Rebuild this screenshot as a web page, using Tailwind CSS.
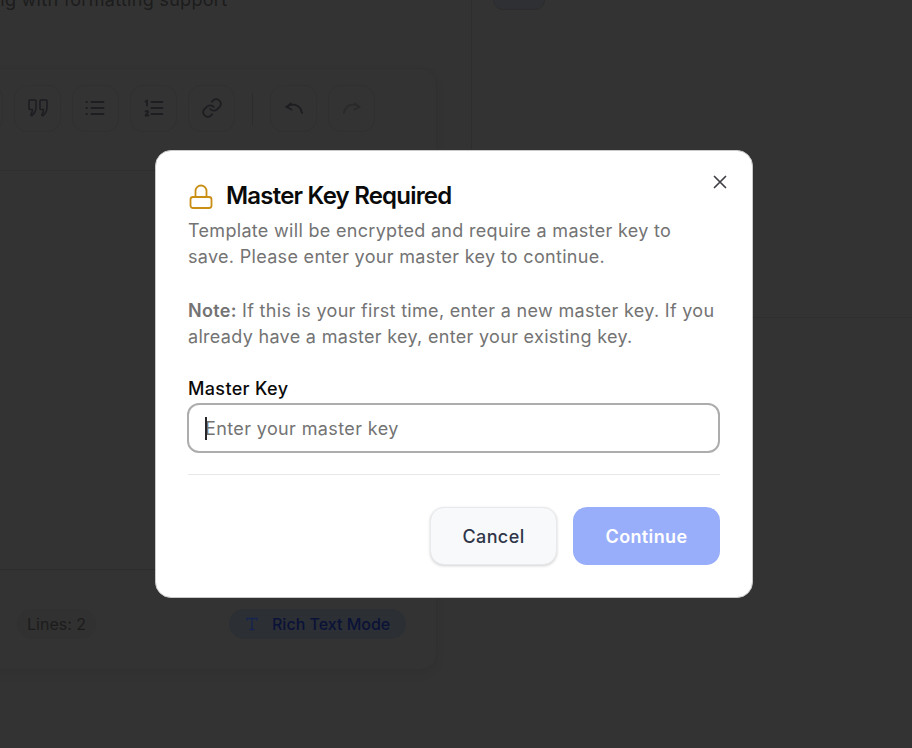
<!DOCTYPE html>
<html lang="en">
<head>
  <meta charset="UTF-8" />
  <meta name="viewport" content="width=device-width, initial-scale=1.0" />
  <title>Master Key Required</title>
  <script src="https://cdn.jsdelivr.net/npm/@tailwindcss/browser@4"></script>
</head>
<body class="bg-[#333333] font-['Inter',sans-serif] overflow-hidden">

<div class="relative h-[748px] w-[912px] overflow-hidden">

  <!-- Page behind the overlay -->
  <div class="flex h-full">
    <div class="w-[471px] shrink-0 pr-[34px] pt-px">
      <p class="mt-[-13px] h-[24px] text-[18px] leading-[24px] tracking-[0.3px] text-[#1c1c1c] whitespace-nowrap ml-[-44px]">Editing with formatting support</p>

      <div class="mt-[56px] ml-[-20px] h-[602px] flex flex-col rounded-2xl border border-[#303030] shadow-[0_4px_10px_rgba(0,0,0,0.06)]">
        <!-- Toolbar -->
        <div class="h-[102px] pb-[22px] border-b border-[#2e2e2e] flex items-center">
          <div class="flex items-center gap-[11px] ml-[-25px]">
            <div class="size-[47px] rounded-[13px] border border-[#303030]"></div>
            <div class="size-[47px] rounded-[13px] border border-[#303030] flex items-center justify-center">
              <svg class="size-[22px] mt-[-2px]" viewBox="0 0 22 22" fill="none" stroke="#1d1d22" stroke-width="1.6" stroke-linecap="round" stroke-linejoin="round"><path d="M3 3h5c.6 0 1 .4 1 1v6.500c0 3.500-1.500 6-4 8-.7.5-1.500-.3-1-1 .8-1.200 1.500-2.500 1.500-5H3c-.6 0-1-.4-1-1V4c0-.6.4-1 1-1z"/><path d="M14 3h5c.6 0 1 .4 1 1v6.500c0 3.500-1.500 6-4 8-.7.5-1.500-.3-1-1 .8-1.200 1.500-2.500 1.500-5H14c-.6 0-1-.4-1-1V4c0-.6.4-1 1-1z"/></svg>
            </div>
            <div class="size-[47px] rounded-[13px] border border-[#303030] flex items-center justify-center">
              <svg class="size-[22px] mt-[-2px]" viewBox="0 0 22 22" fill="none" stroke="#1d1d22" stroke-width="1.8" stroke-linecap="round"><path d="M6.500 5h12M6.500 11h12M6.500 17h12M1.500 5h.5M1.500 11h.5M1.500 17h.5"/></svg>
            </div>
            <div class="size-[47px] rounded-[13px] border border-[#303030] flex items-center justify-center">
              <svg class="size-[22px] mt-[-2px]" viewBox="0 0 22 22" fill="none" stroke="#1d1d22" stroke-width="1.8" stroke-linecap="round" stroke-linejoin="round"><path d="M8.500 5h11M8.500 11h11M8.500 17h11"/><path d="M2.500 4.500 4 3.500v5M2.500 14.500c.4-1 2.800-1 2.800.5 0 1-2.800 2.200-2.800 3.500h3"/></svg>
            </div>
            <div class="size-[47px] rounded-[13px] border border-[#303030] flex items-center justify-center">
              <svg class="size-[22px] mt-[-2px]" viewBox="0 0 24 24" fill="none" stroke="#1d1d22" stroke-width="1.9" stroke-linecap="round" stroke-linejoin="round"><path d="M10 13a5 5 0 0 0 7.500.5l3-3a5 5 0 0 0-7-7l-1.700 1.700"/><path d="M14 11a5 5 0 0 0-7.500-.5l-3 3a5 5 0 0 0 7 7l1.700-1.700"/></svg>
            </div>
            <div class="w-px h-[32px] bg-[#2c2c2c] mx-[6px]"></div>
            <div class="size-[47px] rounded-[13px] border border-[#303030] flex items-center justify-center">
              <svg class="size-[22px] mt-[-2px]" viewBox="0 0 22 22" fill="none" stroke="#1d1d22" stroke-width="1.800" stroke-linecap="round" stroke-linejoin="round"><path d="M8 6.500 3.500 10 8.500 12.500"/><path d="M3.500 10c5-4 13.500-3.500 15.500 6"/></svg>
            </div>
            <div class="size-[47px] rounded-[13px] border border-[#303030] flex items-center justify-center">
              <svg class="size-[22px] mt-[-2px]" viewBox="0 0 22 22" fill="none" stroke="#2a2a2a" stroke-width="1.800" stroke-linecap="round" stroke-linejoin="round"><path d="M14 6.500 18.500 10 13.500 12.500"/><path d="M18.500 10c-5-4-13.500-3.500-15.500 6"/></svg>
            </div>
          </div>
        </div>

        <!-- Editor area -->
        <div class="flex-1"></div>

        <!-- Footer -->
        <div class="h-[100px] border-t border-[#2c2c2c] flex items-center justify-between pl-[36px] pr-[30px] pt-[8px]">
          <span class="h-[30px] px-[10px] rounded-full bg-[#313131] text-[16px] leading-[30px] text-[#1c1c1c]">Lines: 2</span>
          <span class="h-[30px] w-[177px] pl-[15px] rounded-full bg-[#2c2f33] flex items-center gap-[12px] text-[16px] font-medium text-[#0a1238] whitespace-nowrap">
            <svg class="size-[16px] shrink-0" viewBox="0 0 16 16" fill="none" stroke="#152450" stroke-width="1.300" stroke-linecap="round" stroke-linejoin="round"><path d="M3 4V2.500h10V4M8 2.500v11M6 13.500h4"/></svg>
            Rich Text Mode
          </span>
        </div>
      </div>
    </div>

    <!-- Right panel -->
    <div class="flex-1 overflow-hidden">
      <div class="h-[318px] border-l border-b border-[#2e2e2e] pl-[21px]">
        <div class="translate-y-[-31px] w-[52px] h-[41px] rounded-[10px] bg-[#2e3033] border border-[#2c2c2c]"></div>
      </div>
    </div>
  </div>

  <!-- Modal -->
  <div class="absolute inset-0 flex items-center justify-center pr-[4px]">
    <div class="relative w-[598px] h-[448px] bg-white rounded-2xl border border-[#c9c9c9] pt-[31px] px-[32px]">
      <button class="absolute top-[23px] right-[24px] text-[#3f3f46]">
        <svg class="size-[16px]" viewBox="0 0 16 16" fill="none" stroke="currentColor" stroke-width="1.700" stroke-linecap="round"><path d="M2.500 2.500l11 11M13.500 2.500l-11 11"/></svg>
      </button>

      <div class="flex items-center gap-[12px] h-[28px]">
        <svg class="size-[26px] shrink-0" viewBox="0 0 26 26" fill="none" stroke="#c98f14" stroke-width="1.800" stroke-linecap="round" stroke-linejoin="round"><rect x="2.500" y="14" width="21" height="11" rx="2.500"/><path d="M7.500 14V8a5.500 5.500 0 0 1 11 0v6"/></svg>
        <h2 class="text-[24px] leading-[28px] font-semibold tracking-[-0.8px] text-[#0a0a0a] whitespace-nowrap">Master Key Required</h2>
      </div>

      <p class="mt-[8px] text-[18px] leading-[26px] tracking-[0.31px] text-[#737373]">Template will be encrypted and require a master key to save. Please enter your master key to continue.</p>
      <p class="mt-[28px] text-[18px] leading-[26px] tracking-[0.31px] text-[#737373]"><strong class="font-semibold">Note:</strong> If this is your first time, enter a new master key. If you already have a master key, enter your existing key.</p>

      <label class="block mt-[27px] text-[18px] leading-[24px] tracking-[0.35px] font-medium text-[#0a0a0a]">Master Key</label>
      <div class="mt-[2px] ml-[-1px] h-[50px] rounded-[12px] border-2 border-[#adadad] flex items-center pl-[16px] relative">
        <span class="absolute left-[16px] top-[12px] w-[2px] h-[23px] bg-[#27272a]"></span>
        <span class="text-[18px] tracking-[0.38px] text-[#737373]">Enter your master key</span>
      </div>

      <div class="mt-[21px] border-t border-[#e8e8e8]"></div>

      <div class="mt-[32px] flex justify-end gap-[16px]">
        <button class="w-[127px] h-[58px] rounded-[14px] bg-[#f8f9fb] border border-[#e8e9ec] shadow-[0_1px_3px_rgba(0,0,0,0.18)] text-[18px] tracking-[0.4px] font-medium text-[#2f3648]">Cancel</button>
        <button class="w-[147px] h-[58px] rounded-[14px] bg-[#98aefa] text-[18px] tracking-[0.37px] font-semibold text-white">Continue</button>
      </div>
    </div>
  </div>

</div>

</body>
</html>
